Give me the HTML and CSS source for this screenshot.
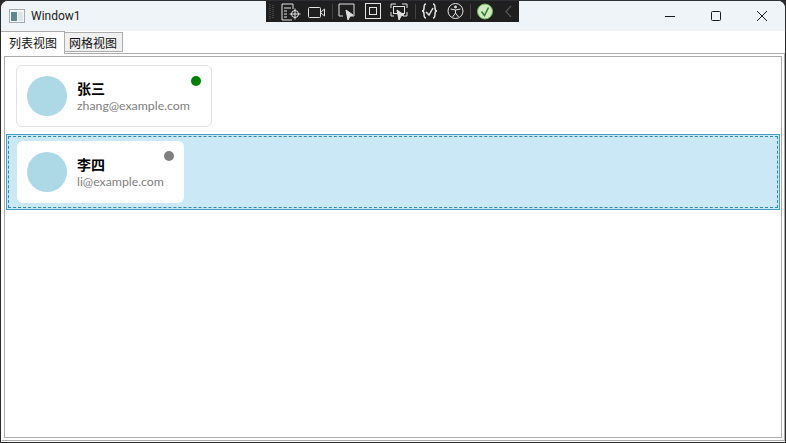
FILE: index.html
```html
<!DOCTYPE html>
<html lang="zh">
<head>
<meta charset="utf-8">
<title>Window1</title>
<link rel="stylesheet" href="styles.css">
</head>
<body>
<div class="window">
  <header class="titlebar">
    <svg class="app-icon" width="16" height="14" viewBox="0 0 16 14">
      <rect x="0.5" y="0.5" width="15" height="13" fill="#f4f6f7" stroke="#a5abb0"/>
      <rect x="2" y="3" width="6" height="9" fill="#5d8791"/>
      <rect x="9" y="3" width="5" height="9" fill="#dfe5e8"/>
    </svg>
    <span class="title">Window1</span>
    <div class="caption">
      <button class="cap-btn"><svg width="12" height="12" viewBox="0 0 12 12"><path d="M1 6.500h10" stroke="#1a1a1a" fill="none"/></svg></button>
      <button class="cap-btn"><svg width="12" height="12" viewBox="0 0 12 12"><rect x="1.500" y="1.500" width="9" height="9" rx="1" stroke="#1a1a1a" fill="none"/></svg></button>
      <button class="cap-btn"><svg width="12" height="12" viewBox="0 0 12 12"><path d="M1 1l10 10M11 1L1 11" stroke="#1a1a1a" fill="none"/></svg></button>
    </div>
  </header>

  <div class="tabs">
    <div class="tab active">列表视图</div>
    <div class="tab">网格视图</div>
  </div>

  <div class="tab-panel">
    <div class="list">
      <div class="row">
        <article class="card card-outlined">
          <div class="avatar"></div>
          <div class="info">
            <div class="name">张三</div>
            <div class="email">zhang@example.com</div>
          </div>
          <span class="dot dot-green"></span>
        </article>
      </div>
      <div class="row selected">
        <article class="card">
          <div class="avatar"></div>
          <div class="info">
            <div class="name">李四</div>
            <div class="email">li@example.com</div>
          </div>
          <span class="dot dot-gray"></span>
        </article>
      </div>
    </div>
  </div>

  <div class="debug-bar">
    <svg width="252" height="21" viewBox="0 0 252 21" fill="none" stroke="#e4e4e4" stroke-width="1">
      <path d="M4 3v15M7 4v14" stroke="#666" stroke-dasharray="1 1"/>
      <path d="M27 8V3H16v16h10M18 7h7M18 10h3M18 13h3M18 16h3"/>
      <circle cx="29" cy="13" r="3.500"/><path d="M29 7.500v11M23.500 13h11"/>
      <rect x="42.500" y="6.500" width="12" height="10" rx="1"/><path d="M55 11l3.500-3v7l-3.500-3"/>
      <path d="M66.500 3v15" stroke="#444"/>
      <path d="M77 15h-4V3h15v12h-4"/><path d="M80 9l7 5-3 1-2 4z" fill="#ddd"/>
      <rect x="99.500" y="2.500" width="15" height="15"/><rect x="103.500" y="6.500" width="7" height="7"/>
      <path d="M125 7V3h5M141 7V3h-5M125 11v4h3M141 11v4h-4"/><rect x="127.500" y="5.500" width="11" height="7"/><path d="M131 9l7 5-3 1-2 4z" fill="#ddd"/>
      <path d="M149.500 3v15" stroke="#444"/>
      <path d="M160 3c-2 0-2 2-2 4s-1 3-2 3c1 0 2 1 2 3s0 4 2 4M167 3c2 0 2 2 2 4s1 3 2 3c-1 0-2 1-2 3s0 4-2 4" stroke-width="1.500"/>
      <path d="M160 11l3 3 4-7" stroke-width="1.500"/>
      <circle cx="189.500" cy="10" r="7.500"/><circle cx="189.500" cy="6" r="1" fill="#ddd"/><path d="M184.500 8l5 1 5-1M189.500 9v3l-3 4M189.500 12l3 4"/>
      <path d="M204.500 3v15" stroke="#444"/>
      <circle cx="219" cy="10.500" r="7.500" fill="#cfeac0" stroke="#6fb558"/><path d="M215.500 10.500l3 4 4-8" stroke="#2c7a2c" stroke-width="1.500"/>
      <path d="M245 5l-5 5.500 5 5.500" stroke="#555" stroke-width="1.300"/>
    </svg>
  </div>
</div>
</body>
</html>
```
FILE: styles.css
```css
* { box-sizing: border-box; }
html, body { margin: 0; height: 100%; }
body {
  background: #2a2a2a;
  font-family: "Lato", "Noto Sans CJK SC", sans-serif;
  overflow: hidden;
}
.window {
  position: relative;
  width: 786px;
  height: 443px;
  background: #fff;
  border: 1px solid #2b2b2b;
  border-top-color: #2b2f33;
  border-radius: 8px 8px 0 0;
  display: flex;
  flex-direction: column;
  overflow: hidden;
}
.titlebar {
  height: 30px;
  flex: none;
  background: #eff4f9;
  display: flex;
  align-items: center;
  padding-left: 8px;
}
.app-icon { flex: none; margin-right: 6px; }
.title {
  font-family: "Roboto", sans-serif;
  font-size: 12px;
  color: #1a1a1a;
}
.caption { margin-left: auto; display: flex; }
.cap-btn {
  width: 46px;
  height: 30px;
  padding: 0;
  border: 0;
  background: none;
  display: flex;
  align-items: center;
  justify-content: center;
}
.tabs {
  height: 22px;
  flex: none;
  display: flex;
  align-items: flex-end;
  position: relative;
  z-index: 1;
  font-family: "Noto Sans CJK SC", sans-serif;
  font-size: 12px;
  color: #111;
}
.tab {
  height: 20px;
  padding: 0 5px 0 4px;
  line-height: 19px;
  background: #f0f0f0;
  border: 1px solid #acacac;
  border-left: 0;
  margin-bottom: 1px;
}
.tab.active {
  height: 23px;
  width: 64px;
  padding: 0 0 0 8px;
  line-height: 22px;
  background: #fff;
  border-bottom: 0;
  margin-bottom: -1px;
}
.tab-panel {
  flex: 1;
  border: 1px solid #acacac;
  border-left-color: #fff;
  padding: 2px;
  margin-bottom: 1px;
  min-height: 0;
}
.list {
  height: 100%;
  border: 1px solid #acacac;
  padding: 1px;
}
.row { padding: 7px 0 7px 10px; }
.row.selected {
  height: 76px;
  padding: 6px 0 0 10px;
  background: #cbe8f6;
  border: 1px solid #4a9fc0;
  outline: 1px dashed #2c8bab;
  outline-offset: -3px;
}
.card {
  position: relative;
  width: 167px;
  height: 62px;
  background: #fff;
  border-radius: 6px;
  display: flex;
  align-items: center;
  gap: 10px;
  padding-left: 10px;
}
.card-outlined {
  width: 196px;
  border: 1px solid #e2e2e2;
}
.avatar {
  width: 40px;
  height: 40px;
  flex: none;
  border-radius: 50%;
  background: #add8e6;
}
.name {
  font-family: "Noto Sans CJK SC", sans-serif;
  font-size: 14px;
  font-weight: 700;
  line-height: 18px;
  color: #000;
}
.email {
  font-size: 12.300px;
  line-height: 17px;
  color: #808080;
  white-space: nowrap;
}
.dot {
  position: absolute;
  top: 10px;
  right: 10px;
  width: 10px;
  height: 10px;
  border-radius: 50%;
}
.dot-green { background: #008000; }
.dot-gray { background: #808080; }
.debug-bar {
  position: absolute;
  top: -1px;
  left: 265px;
  width: 253px;
  height: 22px;
  background: #1f1f1f;
  display: flex;
  align-items: center;
}
```
